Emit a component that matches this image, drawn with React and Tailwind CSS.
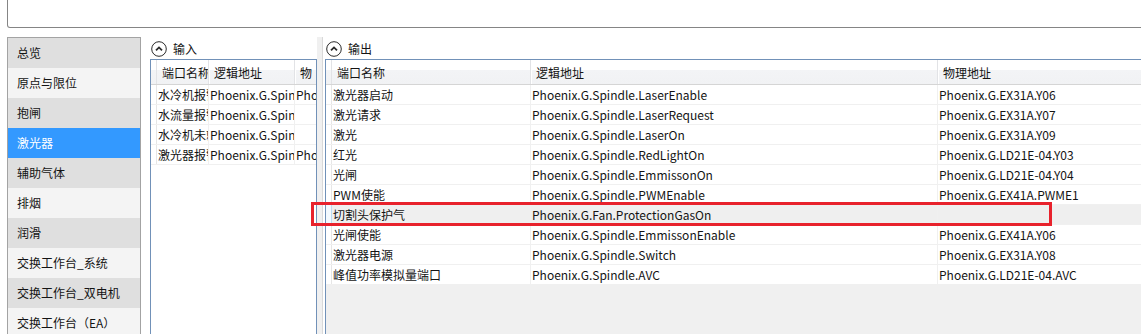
import React from 'react';

const menu = [
  '总览',
  '原点与限位',
  '抱闸',
  '激光器',
  '辅助气体',
  '排烟',
  '润滑',
  '交换工作台_系统',
  '交换工作台_双电机',
  '交换工作台（EA）',
];

const inputs = [
  ['水冷机报警', 'Phoenix.G.Spindle.WaterAlarm', 'Phoenix.G.EX31A.X01'],
  ['水流量报警', 'Phoenix.G.Spindle.FlowAlarm', ''],
  ['水冷机未就绪', 'Phoenix.G.Spindle.ChillerReady', ''],
  ['激光器报警', 'Phoenix.G.Spindle.LaserAlarm', 'Phoenix.G.EX31A.X04'],
];

const outputs = [
  ['激光器启动', 'Phoenix.G.Spindle.LaserEnable', 'Phoenix.G.EX31A.Y06'],
  ['激光请求', 'Phoenix.G.Spindle.LaserRequest', 'Phoenix.G.EX31A.Y07'],
  ['激光', 'Phoenix.G.Spindle.LaserOn', 'Phoenix.G.EX31A.Y09'],
  ['红光', 'Phoenix.G.Spindle.RedLightOn', 'Phoenix.G.LD21E-04.Y03'],
  ['光闸', 'Phoenix.G.Spindle.EmmissonOn', 'Phoenix.G.LD21E-04.Y04'],
  ['PWM使能', 'Phoenix.G.Spindle.PWMEnable', 'Phoenix.G.EX41A.PWME1'],
  ['切割头保护气', 'Phoenix.G.Fan.ProtectionGasOn', ''],
  ['光闸使能', 'Phoenix.G.Spindle.EmmissonEnable', 'Phoenix.G.EX41A.Y06'],
  ['激光器电源', 'Phoenix.G.Spindle.Switch', 'Phoenix.G.EX31A.Y08'],
  ['峰值功率模拟量端口', 'Phoenix.G.Spindle.AVC', 'Phoenix.G.LD21E-04.AVC'],
];

function CollapseIcon() {
  return (
    <svg width="16" height="16" viewBox="0 0 16 16" className="shrink-0">
      <circle cx="8" cy="8" r="7.3" fill="#fff" stroke="#2b2b2b" strokeWidth="1" />
      <path d="M5 9.4 L8 6.4 L11 9.4" fill="none" stroke="#2b2b2b" strokeWidth="1.8" />
    </svg>
  );
}

function SectionTitle({ label }) {
  return (
    <div className="h-[22px] flex items-center gap-[6px] pl-[1px] pt-[2px] bg-white">
      <CollapseIcon />
      <span>{label}</span>
    </div>
  );
}

const headBg =
  'bg-[linear-gradient(to_bottom,#ffffff_0%,#ffffff_40%,#f3f4f6_41%,#f1f2f4_100%)]';

function HeaderCell({ w, children, last }) {
  return (
    <div
      className={`${w} h-full flex items-center pl-[5px] pt-[1px] overflow-hidden whitespace-nowrap ${
        last ? 'flex-1' : 'border-r border-[#e2e3e6] shadow-[1px_0_0_#ffffff]'
      }`}
    >
      {children}
    </div>
  );
}

function Cell({ w, children, last }) {
  return (
    <div
      className={`${w} h-full flex items-center pl-[1px] overflow-hidden whitespace-nowrap ${
        last ? 'flex-1' : 'border-r border-[#f0f0f0]'
      }`}
    >
      {children}
    </div>
  );
}

function Grid({ cols, head, rows, selected, emptyBg }) {
  return (
    <div
      className={`flex-1 border-l border-t border-[#7191b8] flex flex-col ${emptyBg}`}
    >
      <div className={`h-[25px] flex border-b border-[#d5d5d5] ${headBg}`}>
        <div className="w-[6px] h-full border-r border-[#e2e3e6]" />
        {head.map((h, i) => (
          <HeaderCell key={h} w={cols[i]} last={i === head.length - 1}>
            {h}
          </HeaderCell>
        ))}
      </div>
      {rows.map((r, idx) => (
        <div
          key={idx}
          className={`h-[20px] flex border-b border-[#f0f0f0] ${
            idx === selected ? 'bg-[#efefef]' : 'bg-white'
          }`}
        >
          <div
            className={`w-[6px] h-full border-r ${
              idx === selected ? 'border-[#bcdcf4] bg-[#f3f9fe]' : 'border-[#e6e6e6] bg-white'
            }`}
          />
          {r.map((c, i) => (
            <Cell key={i} w={cols[i]} last={i === r.length - 1}>
              {c}
            </Cell>
          ))}
        </div>
      ))}
    </div>
  );
}

export default function App() {
  return (
    <div className="relative w-[1141px] h-[334px] overflow-hidden bg-white text-[12px] leading-none text-[#141414] font-['Microsoft_YaHei','Noto_Sans_CJK_SC',sans-serif]">
      {/* top input box */}
      <div className="ml-[7px] mr-[-12px] h-[28px] border border-t-0 border-[#858585] rounded-b-[3px]" />

      <div className="flex mt-[9px] h-[297px]">
        {/* side menu */}
        <div className="ml-[7px] w-[134px] border-l border-r border-t border-[#a3a3a3] flex flex-col shrink-0">
          {menu.map((m, i) => (
            <div
              key={m}
              className={`h-[30px] shrink-0 flex items-center pl-[9px] ${
                i === 3
                  ? 'bg-[#3399ff] text-white'
                  : i % 2 === 0
                  ? 'bg-[#dfdfdf]'
                  : 'bg-[#f4f4f4]'
              }`}
            >
              {m}
            </div>
          ))}
        </div>

        {/* inputs */}
        <div className="ml-[9px] w-[167px] flex flex-col shrink-0">
          <SectionTitle label="输入" />
          <div className="flex-1 flex border-r border-[#7191b8]">
            <Grid
              cols={['w-[52px]', 'w-[86px]', 'w-[21px]']}
              head={['端口名称', '逻辑地址', '物']}
              rows={inputs}
              selected={-1}
              emptyBg="bg-white"
            />
          </div>
        </div>

        {/* splitter */}
        <div className="w-[8px] shrink-0 flex">
          <div className="w-[5px] bg-[#f0f0f0]" />
          <div className="w-[1px] bg-[#d9d9d9]" />
          <div className="w-[2px] bg-white" />
        </div>

        {/* outputs */}
        <div className="flex-1 flex flex-col min-w-0">
          <SectionTitle label="输出" />
          <div className="flex-1 flex">
            <Grid
              cols={['w-[199px]', 'w-[407px]', 'w-[204px]']}
              head={['端口名称', '逻辑地址', '物理地址']}
              rows={outputs}
              selected={6}
              emptyBg="bg-[#f0f0f0]"
            />
          </div>
        </div>
      </div>

      {/* highlight marker */}
      <div className="absolute left-[311px] top-[202px] w-[741px] h-[24px] border-[3px] border-[#e8222c]" />
    </div>
  );
}
